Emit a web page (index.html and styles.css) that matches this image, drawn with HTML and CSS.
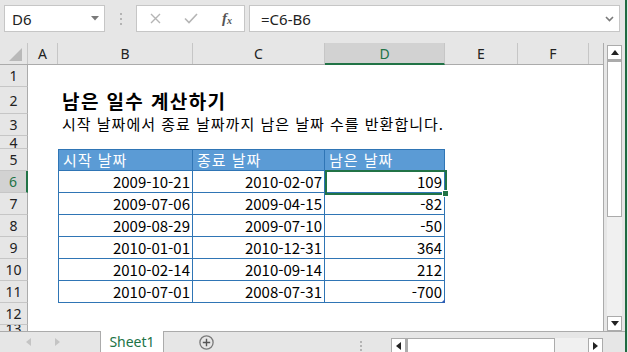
FILE: index.html
```html
<!DOCTYPE html>
<html lang="ko">
<head>
  <meta charset="UTF-8">
  <meta name="viewport" content="width=device-width, initial-scale=1.0">
  <title>남은 일수 계산하기</title>
  <link rel="stylesheet" href="styles.css">
</head>
<body>
  <div class="window">
    <div class="app">
      <div class="formula-bar">
        <div class="name-box">
          <span>D6</span>
          <svg class="caret" width="8" height="5" viewBox="0 0 8 5"><path d="M0 0h8L4 4.5z" fill="#7a7a7a"/></svg>
        </div>
        <div class="grip"><i></i><i></i><i></i></div>
        <div class="fn-box">
          <svg class="cancel" width="11" height="11" viewBox="0 0 11 11"><path d="M1 1l9 9M10 1l-9 9" stroke="#b5b5b5" stroke-width="1.4"/></svg>
          <svg class="enter" width="14" height="11" viewBox="0 0 14 11"><path d="M1 5.5l4 4 8-8.5" stroke="#b5b5b5" stroke-width="1.6" fill="none"/></svg>
          <span class="fx">f<sub>x</sub></span>
        </div>
        <div class="formula">
          <span>=C6-B6</span>
          <svg class="chevron" width="9" height="6" viewBox="0 0 9 6"><path d="M1 1l3.5 3.5L8 1" stroke="#7a7a7a" stroke-width="1.6" fill="none"/></svg>
        </div>
      </div>

      <div class="main">
        <div class="sheet">
          <div class="col-heads">
            <div class="corner">
              <svg width="14" height="13" viewBox="0 0 14 13"><path d="M13 0v13H0z" fill="#b9b9b9"/></svg>
            </div>
            <div class="ch a">A</div>
            <div class="ch b">B</div>
            <div class="ch c">C</div>
            <div class="ch d active">D</div>
            <div class="ch e">E</div>
            <div class="ch f">F</div>
            <div class="ch g"></div>
          </div>

          <div class="row"><div class="rh">1</div></div>
          <div class="row tall">
            <div class="rh">2</div><div class="a"></div>
            <div class="title">남은 일수 계산하기</div>
          </div>
          <div class="row">
            <div class="rh">3</div><div class="a"></div>
            <div class="subtitle">시작 날짜에서 종료 날짜까지 남은 날짜 수를 반환합니다.</div>
          </div>
          <div class="row thin"><div class="rh">4</div></div>
          <div class="row">
            <div class="rh">5</div><div class="a"></div>
            <div class="t th b">시작 날짜</div>
            <div class="t th c">종료 날짜</div>
            <div class="t th d">남은 날짜</div>
          </div>
          <div class="row">
            <div class="rh active">6</div><div class="a"></div>
            <div class="t b num">2009-10-21</div>
            <div class="t c num">2010-02-07</div>
            <div class="t d num sel">109</div>
          </div>
          <div class="row">
            <div class="rh">7</div><div class="a"></div>
            <div class="t b num">2009-07-06</div>
            <div class="t c num">2009-04-15</div>
            <div class="t d num">-82</div>
          </div>
          <div class="row">
            <div class="rh">8</div><div class="a"></div>
            <div class="t b num">2009-08-29</div>
            <div class="t c num">2009-07-10</div>
            <div class="t d num">-50</div>
          </div>
          <div class="row">
            <div class="rh">9</div><div class="a"></div>
            <div class="t b num">2010-01-01</div>
            <div class="t c num">2010-12-31</div>
            <div class="t d num">364</div>
          </div>
          <div class="row">
            <div class="rh">10</div><div class="a"></div>
            <div class="t b num">2010-02-14</div>
            <div class="t c num">2010-09-14</div>
            <div class="t d num">212</div>
          </div>
          <div class="row">
            <div class="rh">11</div><div class="a"></div>
            <div class="t b num">2010-07-01</div>
            <div class="t c num">2008-07-31</div>
            <div class="t d num last">-700</div>
          </div>
          <div class="row"><div class="rh">12</div></div>
          <div class="row stub"><div class="rh">13</div></div>
        </div>

        <div class="vscroll">
          <div class="sb-btn">
            <svg width="8" height="5" viewBox="0 0 8 5"><path d="M0 5h8L4 0z" fill="#222"/></svg>
          </div>
          <div class="v-thumb"></div>
          <div class="track"></div>
          <div class="sb-btn">
            <svg width="8" height="5" viewBox="0 0 8 5"><path d="M0 0h8L4 5z" fill="#222"/></svg>
          </div>
        </div>
      </div>

      <div class="tabs">
        <div class="tab-nav">
          <svg width="5" height="8" viewBox="0 0 5 8"><path d="M5 0v8L0 4z" fill="#c4c4c4"/></svg>
          <svg width="5" height="8" viewBox="0 0 5 8"><path d="M0 0v8l5-4z" fill="#c4c4c4"/></svg>
        </div>
        <div class="tab">Sheet1</div>
        <div class="add-sheet">
          <svg width="15" height="15" viewBox="0 0 15 15"><circle cx="7.5" cy="7.5" r="6.6" stroke="#7a7a7a" stroke-width="1.3" fill="none"/><path d="M7.5 3.8v7.4M3.8 7.5h7.4" stroke="#555" stroke-width="1.4"/></svg>
        </div>
        <div class="h-grip"><i></i><i></i><i></i></div>
        <div class="hscroll">
          <div class="sb-btn h">
            <svg width="5" height="8" viewBox="0 0 5 8"><path d="M5 0v8L0 4z" fill="#222"/></svg>
          </div>
          <div class="h-thumb"></div>
          <div class="track"></div>
          <div class="sb-btn h">
            <svg width="5" height="8" viewBox="0 0 5 8"><path d="M0 0v8l5-4z" fill="#222"/></svg>
          </div>
        </div>
      </div>
    </div>
    <div class="edge"></div>
  </div>
</body>
</html>
```

FILE: styles.css
```css
body {
  margin: 0;
  font-family: "Noto Sans CJK KR", "Noto Sans", sans-serif;
  background-color: #e6e6e6;
  overflow: hidden;
}

.window {
  display: flex;
  width: 628px;
  height: 352px;
  background-color: #e6e6e6;
}

.app {
  width: 625px;
  display: flex;
  flex-direction: column;
}

.edge {
  width: 2px;
  background-color: #1f6b41;
}

/* formula bar */
.formula-bar {
  height: 43px;
  display: flex;
  align-items: flex-start;
  padding-top: 5px;
  box-sizing: border-box;
}

.name-box,
.fn-box,
.formula {
  height: 27px;
  box-sizing: border-box;
  background-color: #fff;
  border: 1px solid #c6c6c6;
  display: flex;
  align-items: center;
}

.name-box {
  width: 101px;
  margin-left: 4px;
  padding-left: 7px;
  font-family: "Noto Sans", sans-serif;
  font-size: 15px;
  color: #222;
}

.name-box span {
  flex: 1;
}

.caret {
  margin-right: 5px;
}

.grip {
  width: 31px;
  height: 27px;
  display: flex;
  flex-direction: column;
  align-items: center;
  justify-content: center;
  gap: 3px;
}

.grip i,
.h-grip i {
  width: 2px;
  height: 2px;
  background-color: #b4b4b4;
}

.fn-box {
  width: 109px;
  padding-left: 13px;
}

.cancel {
  margin-right: 23px;
}

.enter {
  margin-right: 24px;
}

.fx {
  font-family: "Liberation Serif", serif;
  font-style: italic;
  font-weight: bold;
  font-size: 15px;
  color: #555;
  line-height: 1;
}

.fx sub {
  font-size: 10px;
  vertical-align: -1px;
}

.formula {
  width: 371px;
  margin-left: 4px;
  padding-left: 11px;
  font-family: "Noto Sans", sans-serif;
  font-size: 15px;
  color: #222;
}

.formula span {
  flex: 1;
}

.chevron {
  margin-right: 5px;
}

/* sheet */
.main {
  flex: 1;
  display: flex;
}

.sheet {
  width: 604px;
  height: 288px;
  overflow: hidden;
  background-color: #fff;
  border-right: 1px solid #ababab;
  box-sizing: border-box;
}

.col-heads {
  display: flex;
  height: 21px;
  background-color: #e6e6e6;
  border-bottom: 1px solid #ababab;
  font-family: "Noto Sans", sans-serif;
  font-size: 14px;
  color: #222;
}

.corner {
  width: 28px;
  display: flex;
  align-items: flex-end;
  justify-content: flex-end;
  padding: 0 4px 3px 0;
  box-sizing: border-box;
  border-right: 1px solid #c6c6c6;
}

.ch {
  display: flex;
  align-items: center;
  justify-content: center;
  border-right: 1px solid #c6c6c6;
  box-sizing: border-box;
}

.ch.active {
  background-color: #d2d2d2;
  color: #217346;
  border-bottom: 2px solid #217346;
  margin-bottom: -1px;
}

.a { width: 30px; flex: none; }
.b { width: 135px; flex: none; }
.c { width: 132px; flex: none; }
.d { width: 120px; flex: none; }
.e { width: 73px; flex: none; }
.f { width: 71px; flex: none; }
.g { width: 14px; flex: none; border-right: none; }

.row {
  display: flex;
  height: 22px;
}

.row.tall {
  height: 27px;
}

.row.thin {
  height: 13px;
}

.row.stub {
  height: 7px;
}

.rh {
  width: 28px;
  flex: none;
  background-color: #e6e6e6;
  border-right: 1px solid #ababab;
  border-bottom: 1px solid #c6c6c6;
  box-sizing: border-box;
  overflow: hidden;
  font-family: "Noto Sans", sans-serif;
  font-size: 14px;
  color: #222;
  display: flex;
  align-items: center;
  justify-content: center;
}

.rh.active {
  background-color: #d2d2d2;
  color: #217346;
  border-right: 2px solid #217346;
}

.title {
  white-space: nowrap;
  padding: 3px 0 0 4px;
  font-size: 19px;
  font-weight: bold;
  letter-spacing: 1.4px;
  color: #000;
  line-height: 21px;
}

.subtitle {
  white-space: nowrap;
  padding-left: 4px;
  font-size: 15px;
  letter-spacing: 1px;
  line-height: 20px;
  color: #000;
}

/* table */
.t {
  box-sizing: border-box;
  border-right: 1px solid #2f75b5;
  border-bottom: 1px solid #2f75b5;
  font-size: 15px;
  line-height: 21px;
  white-space: nowrap;
  color: #000;
}

.t.b {
  border-left: 1px solid #2f75b5;
}

.th {
  background-color: #5b9bd5;
  border-top: 1px solid #2f75b5;
  color: #fff;
  padding-left: 4px;
  letter-spacing: 1px;
  line-height: 20px;
}

.num {
  text-align: right;
  padding-right: 2px;
}

.sel,
.last {
  position: relative;
}

.sel::before {
  content: "";
  position: absolute;
  left: 0;
  top: -1px;
  right: -3px;
  bottom: -3px;
  border: 2px solid #217346;
}

.sel::after {
  content: "";
  position: absolute;
  right: -5px;
  bottom: -5px;
  width: 5px;
  height: 5px;
  background-color: #217346;
  border: 1px solid #fff;
}

.last::after {
  content: "";
  position: absolute;
  right: -1px;
  bottom: -1px;
  width: 0;
  height: 0;
  border-left: 4px solid transparent;
  border-bottom: 4px solid #2f5fb5;
}

/* scroll bars */
.vscroll {
  width: 15px;
  margin-left: 3px;
  padding-top: 2px;
  height: 288px;
  box-sizing: border-box;
  display: flex;
  flex-direction: column;
}

.sb-btn {
  height: 15px;
  flex: none;
  background-color: #fff;
  border: 1px solid #ababab;
  box-sizing: border-box;
  display: flex;
  align-items: center;
  justify-content: center;
}

.v-thumb {
  height: 157px;
  background-color: #fff;
  border: 1px solid #ababab;
  border-top-width: 2px;
  box-sizing: border-box;
}

.track {
  flex: 1;
  background-color: #f0f0f0;
}

.tabs {
  height: 21px;
  display: flex;
  border-top: 1px solid #ababab;
  box-sizing: border-box;
}

.tab-nav {
  width: 100px;
  display: flex;
  align-items: center;
  gap: 24px;
  padding-left: 26px;
  box-sizing: border-box;
}

.tab {
  width: 64px;
  height: 21px;
  margin-top: -1px;
  background-color: #fff;
  border-left: 1px solid #ababab;
  border-right: 1px solid #ababab;
  box-sizing: border-box;
  font-family: "Noto Sans", sans-serif;
  font-size: 14px;
  color: #217346;
  display: flex;
  align-items: center;
  justify-content: center;
}

.add-sheet {
  width: 86px;
  display: flex;
  align-items: center;
  padding-left: 35px;
  box-sizing: border-box;
}

.h-grip {
  width: 141px;
  display: flex;
  flex-direction: column;
  align-items: center;
  justify-content: flex-end;
  gap: 2px;
  padding: 0 0 1px 80px;
  box-sizing: border-box;
}

.hscroll {
  width: 212px;
  margin-top: 6px;
  display: flex;
}

.sb-btn.h {
  width: 15px;
  height: auto;
  border-bottom: none;
}

.h-thumb {
  width: 149px;
  background-color: #fff;
  border: 1px solid #ababab;
  border-bottom: none;
  border-left-width: 2px;
  box-sizing: border-box;
}
```
